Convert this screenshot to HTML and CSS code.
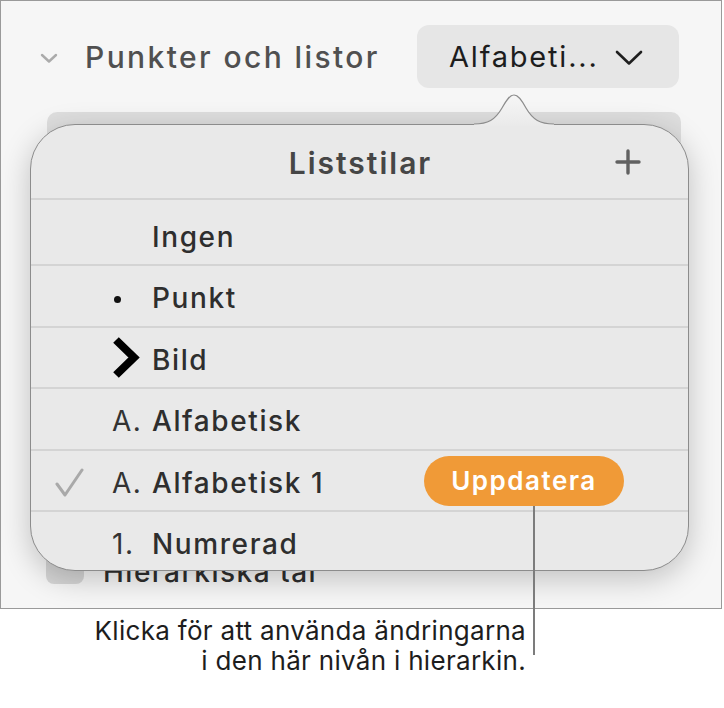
FILE: index.html
```html
<!DOCTYPE html>
<html lang="sv">
<head>
  <meta charset="UTF-8">
  <title>Punkter och listor</title>
  <link rel="stylesheet" href="styles.css">
</head>
<body>
  <div class="panel">
    <div class="section-head">
      <svg class="disclosure" width="18" height="12" viewBox="0 0 18 12">
        <polyline points="2,3 9,9.5 16,3" fill="none" stroke="#ababab" stroke-width="2.4" stroke-linecap="round" stroke-linejoin="round"/>
      </svg>
      <span class="section-title">Punkter och listor</span>
      <div class="popup">
        <span>Alfabeti...</span>
        <svg width="28" height="16" viewBox="0 0 28 16">
          <polyline points="2,2 14,13.5 26,2" fill="none" stroke="#1f1f1f" stroke-width="2.6" stroke-linecap="round" stroke-linejoin="round"/>
        </svg>
      </div>
    </div>

    <div class="field"></div>

    <div class="option-row">
      <span class="checkbox"></span>
      <span class="option-label">Hierarkiska tal</span>
    </div>

    <!-- popover ovanpå panelen -->
    <div class="popover">
      <svg class="popover-arrow" width="80" height="33" viewBox="0 0 80 33">
        <defs>
          <linearGradient id="arrowFill" x1="0" y1="0" x2="0" y2="1">
            <stop offset="0" stop-color="#f6f6f6"/>
            <stop offset="1" stop-color="#eaeaea"/>
          </linearGradient>
        </defs>
        <path d="M0,31 C14,31 21,27 28,15 C33,6 36,2 40,2 C44,2 47,6 52,15 C59,27 66,31 80,31 L80,33 L0,33 Z" fill="url(#arrowFill)"/>
        <path d="M0,31 C14,31 21,27 28,15 C33,6 36,2 40,2 C44,2 47,6 52,15 C59,27 66,31 80,31" fill="none" stroke="#8c8c8c" stroke-width="1.2"/>
      </svg>

      <div class="popover-head">
        <span class="popover-title">Liststilar</span>
        <svg class="add" width="26" height="26" viewBox="0 0 26 26">
          <path d="M13,2 V24 M2,13 H24" stroke="#616161" stroke-width="3.4" stroke-linecap="round"/>
        </svg>
      </div>

      <ul class="style-list">
        <li class="style-row first">
          <span class="check"></span>
          <span class="marker"></span>
          <span class="label">Ingen</span>
        </li>
        <li class="style-row">
          <span class="check"></span>
          <span class="marker"><span class="dot"></span></span>
          <span class="label">Punkt</span>
        </li>
        <li class="style-row">
          <span class="check"></span>
          <span class="marker">
            <svg width="32" height="44" viewBox="0 0 32 44">
              <polyline points="4,4 22,21.5 4,39" fill="none" stroke="#000" stroke-width="8" stroke-linejoin="miter"/>
            </svg>
          </span>
          <span class="label">Bild</span>
        </li>
        <li class="style-row">
          <span class="check"></span>
          <span class="marker text-marker">A.</span>
          <span class="label">Alfabetisk</span>
        </li>
        <li class="style-row">
          <span class="check">
            <svg width="30" height="30" viewBox="0 0 30 30">
              <polyline points="2,16 10,27 27,2" fill="none" stroke="#a9a9a9" stroke-width="3" stroke-linecap="round" stroke-linejoin="round"/>
            </svg>
          </span>
          <span class="marker text-marker">A.</span>
          <span class="label">Alfabetisk 1</span>
          <span class="update-btn">Uppdatera</span>
        </li>
        <li class="style-row">
          <span class="check"></span>
          <span class="marker text-marker">1.</span>
          <span class="label">Numrerad</span>
        </li>
      </ul>
    </div>
  </div>

  <div class="callout">
    <p>Klicka för att använda ändringarna<br>i den här nivån i hierarkin.</p>
  </div>
  <span class="callout-line"></span>
</body>
</html>
```

FILE: styles.css
```css
/* Allmänt */
body {
  margin: 0;
  background: #ffffff;
  font-family: 'Inter', 'Roboto', sans-serif;
  color: #1d1d1d;
  position: relative;
  width: 724px;
  height: 708px;
  overflow: hidden;
}

/* Panelen */
.panel {
  position: relative;
  width: 720px;
  height: 607px;
  border: 1px solid #9a9a9a;
  background: #f6f6f6;
}

.section-head {
  display: flex;
  align-items: center;
  height: 63px;
  padding: 24px 42px 0 39px;
}

.disclosure {
  margin-right: 27px;
  margin-top: 2px;
}

.section-title {
  font-size: 30px;
  font-weight: 500;
  color: #505050;
  letter-spacing: 2.4px;
}

.popup {
  margin-left: auto;
  display: flex;
  align-items: center;
  width: 262px;
  height: 63px;
  box-sizing: border-box;
  padding: 0 36px 0 32px;
  background: #e6e6e6;
  border-radius: 12px;
  font-size: 29px;
  color: #1d1d1d;
  letter-spacing: 1.8px;
}

.popup svg {
  margin-left: auto;
  margin-top: 2px;
}

/* Underliggande innehåll */
.field {
  margin: 24px 40px 0 46px;
  height: 423px;
  border-radius: 10px;
  background: #dedede;
}

.option-row {
  display: flex;
  align-items: center;
  margin: 15px 0 0 45px;
  height: 34px;
}

.checkbox {
  width: 38px;
  height: 34px;
  border-radius: 8px;
  background: #d6d6d6;
}

.option-label {
  margin-left: 19px;
  font-size: 28px;
  font-weight: 500;
  color: #2e2e2e;
  letter-spacing: 1.5px;
  padding-top: 10px;
}

/* Popover */
.popover {
  position: absolute;
  left: 29px;
  top: 123px;
  width: 657px;
  height: 445px;
  border: 1px solid #8c8c8c;
  border-radius: 45px;
  background: #e9e9e9;
  box-shadow: 0 8px 30px rgba(0, 0, 0, 0.22);
}

.popover-arrow {
  position: absolute;
  left: 443px;
  top: -32px;
}

.popover-head {
  position: relative;
  height: 73px;
  display: flex;
  align-items: center;
  justify-content: center;
}

.popover-title {
  font-size: 30px;
  font-weight: 600;
  color: #464646;
  letter-spacing: 2px;
  padding: 2px 0 0 2px;
}

.add {
  position: absolute;
  right: 47px;
  top: 24px;
}

.style-list {
  list-style: none;
  margin: 0;
  padding: 0;
}

.style-row {
  position: relative;
  display: flex;
  align-items: center;
  height: 61.5px;
  box-sizing: border-box;
  padding: 5px 0 0 24px;
  border-top: 2px solid #d4d4d4;
}

.style-row.first {
  height: 66px;
  padding-top: 9px;
}

.check {
  width: 57px;
  display: flex;
  align-items: center;
}

.marker {
  width: 40px;
  display: flex;
  align-items: center;
}

.dot {
  width: 7px;
  height: 7px;
  border-radius: 50%;
  background: #111;
  margin: 3px 0 0 2px;
}

.marker svg {
  margin-top: -4px;
}

.text-marker {
  font-size: 28px;
  color: #333;
  letter-spacing: 1.5px;
}

.label {
  font-size: 28px;
  font-weight: 500;
  color: #2e2e2e;
  letter-spacing: 1.6px;
}

.update-btn {
  position: absolute;
  left: 393px;
  top: 5px;
  width: 200px;
  height: 50px;
  border-radius: 25px;
  background: #f09a37;
  color: #ffffff;
  font-size: 26px;
  font-weight: 600;
  letter-spacing: 1.5px;
  display: flex;
  align-items: center;
  justify-content: center;
}

/* Förklaring */
.callout {
  width: 526px;
  text-align: right;
  margin-top: 7px;
}

.callout p {
  margin: 0;
  font-size: 26px;
  line-height: 30px;
  letter-spacing: 0.3px;
  color: #1d1d1d;
}

.callout-line {
  position: absolute;
  left: 533px;
  top: 506px;
  width: 2px;
  height: 149px;
  background: #7c7c7c;
}
```
